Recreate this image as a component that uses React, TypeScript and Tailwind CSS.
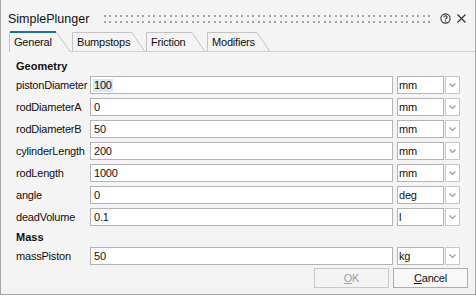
import React from "react";

const rows: [string, string, string][] = [
  ["pistonDiameter", "100", "mm"],
  ["rodDiameterA", "0", "mm"],
  ["rodDiameterB", "50", "mm"],
  ["cylinderLength", "200", "mm"],
  ["rodLength", "1000", "mm"],
  ["angle", "0", "deg"],
  ["deadVolume", "0.1", "l"],
];

function Chevron() {
  return (
    <svg width="7" height="5" viewBox="0 0 7 5">
      <path d="M0.5 0.5 L3.5 3.5 L6.5 0.5" fill="none" stroke="#9a9a9a" strokeWidth="1.2" />
    </svg>
  );
}

function Row({ label, value, unit, highlight }: { label: string; value: string; unit: string; highlight?: boolean }) {
  return (
    <div className="flex h-[18px] items-center">
      <div className="w-[74px] text-[11px] tracking-[-0.2px] text-[#111]">{label}</div>
      <div className="flex h-full w-[303px] items-center border border-[#b4b4b4] bg-white pl-[2px] text-[11px] tracking-[-0.2px] text-[#111]">
        <span className={highlight ? "bg-[#d4e8f8] px-[1px] leading-[13px]" : "px-[1px] leading-[13px]"}>{value}</span>
      </div>
      <div className="ml-[4px] flex h-full w-[47px] items-center border border-[#b4b4b4] bg-white pl-[1px] text-[11px] tracking-[-0.2px] text-[#111]">
        {unit}
      </div>
      <div className="ml-[1px] flex h-full w-[15px] items-center justify-center border border-[#c8c8c8] bg-white">
        <Chevron />
      </div>
    </div>
  );
}

function Tab({ label, width, ml }: { label: string; width: number; ml: string }) {
  return (
    <div className={`relative flex h-[19px] items-center pl-[5px] pt-[1px] text-[11px] tracking-[-0.2px] text-[#111] ${ml}`} style={{ width }}>
      <svg className="absolute left-0 top-0" width={width} height={19}>
        <path d={`M0.5 19 V0.5 H${width - 13} L${width - 0.5} 19`} fill="none" stroke="#c4c4c4" strokeWidth="1" />
      </svg>
      <span className="relative">{label}</span>
    </div>
  );
}

export default function App() {
  return (
    <div className="h-[296px] w-[476px] bg-white" style={{ fontFamily: '"Liberation Sans", Arial, sans-serif' }}>
      <div className="flex h-[295px] w-[476px] flex-col border-x border-b border-[#a8a8a8] bg-[#f4f4f4]">
        {/* title bar */}
        <div className="flex h-[31px] items-start">
          <div className="mt-[12px] w-[103px] pl-[7px] text-[12.5px] leading-[15px] text-[#111]">SimplePlunger</div>
          <svg className="mt-[15px]" width="327" height="8">
            <defs>
              <pattern id="grip" width="11" height="6" patternUnits="userSpaceOnUse">
                <rect x="0" y="0" width="2" height="2" fill="#a4a4a4" />
                <rect x="5" y="0" width="2" height="2" fill="#a4a4a4" />
              </pattern>
            </defs>
            <rect x="0" y="0" width="327" height="8" fill="url(#grip)" />
          </svg>
          <svg className="ml-[9px] mt-[13px]" width="11" height="11" viewBox="0 0 11 11">
            <circle cx="5.5" cy="5.5" r="4.6" fill="none" stroke="#333" strokeWidth="1.1" />
            <path d="M3.9 4.3 C3.9 3.3 4.6 2.8 5.5 2.8 C6.4 2.8 7.1 3.4 7.1 4.2 C7.1 5.2 5.6 5.3 5.6 6.5" fill="none" stroke="#333" strokeWidth="1.1" />
            <rect x="5" y="7.4" width="1.2" height="1.2" fill="#333" />
          </svg>
          <svg className="ml-[6px] mt-[14px]" width="9" height="9" viewBox="0 0 9 9">
            <path d="M0.5 0.5 L8.5 8.5 M8.5 0.5 L0.5 8.5" stroke="#333" strokeWidth="1.1" />
          </svg>
        </div>

        {/* tabs */}
        <div className="flex h-[21px] pl-[8px]">
          <div className="relative flex h-[21px] w-[62px] items-center pl-[5px] pt-[1px] text-[11px] tracking-[-0.2px] text-[#111]">
            <svg className="absolute left-0 top-0" width="62" height="21">
              <path d="M0.5 21 V1.5" fill="none" stroke="#c4c4c4" strokeWidth="1" />
              <path d="M47 1 L61.5 21" fill="none" stroke="#c4c4c4" strokeWidth="1" />
              <path d="M1 1 H47" fill="none" stroke="#1a6fae" strokeWidth="2" />
            </svg>
            <span className="relative">General</span>
          </div>
          <div className="flex flex-1 items-end border-b border-[#cfcfcf]">
            <Tab label="Bumpstops" width={73} ml="ml-[1px]" />
            <Tab label="Friction" width={59} ml="ml-[1px]" />
            <Tab label="Modifiers" width={63} ml="ml-[2px]" />
          </div>
        </div>

        {/* content */}
        <div className="flex flex-1 flex-col pl-[15px] pt-[7px]">
          <div className="h-[14px] text-[11px] font-bold leading-[14px] text-[#111]">Geometry</div>
          <div className="mt-[3px] flex flex-col gap-[4px]">
            {rows.map(([l, v, u], i) => (
              <Row key={l} label={l} value={v} unit={u} highlight={i === 0} />
            ))}
          </div>
          <div className="mt-[4px] h-[14px] text-[11px] font-bold leading-[14px] text-[#111]">Mass</div>
          <div className="mt-[3px]">
            <Row label="massPiston" value="50" unit="kg" />
          </div>
          <div className="mt-[3px] flex justify-end gap-[4px] pr-[7px]">
            <div className="flex h-[20px] w-[75px] items-center justify-center border border-[#cacaca] bg-[#f4f4f4] text-[11px] tracking-[-0.2px] text-[#a0a0a0]">
              <span><span className="underline">O</span>K</span>
            </div>
            <div className="flex h-[20px] w-[75px] items-center justify-center border border-[#adadad] bg-[#f8f8f8] text-[11px] tracking-[-0.2px] text-[#111]">
              <span><span className="underline">C</span>ancel</span>
            </div>
          </div>
        </div>
      </div>
    </div>
  );
}
